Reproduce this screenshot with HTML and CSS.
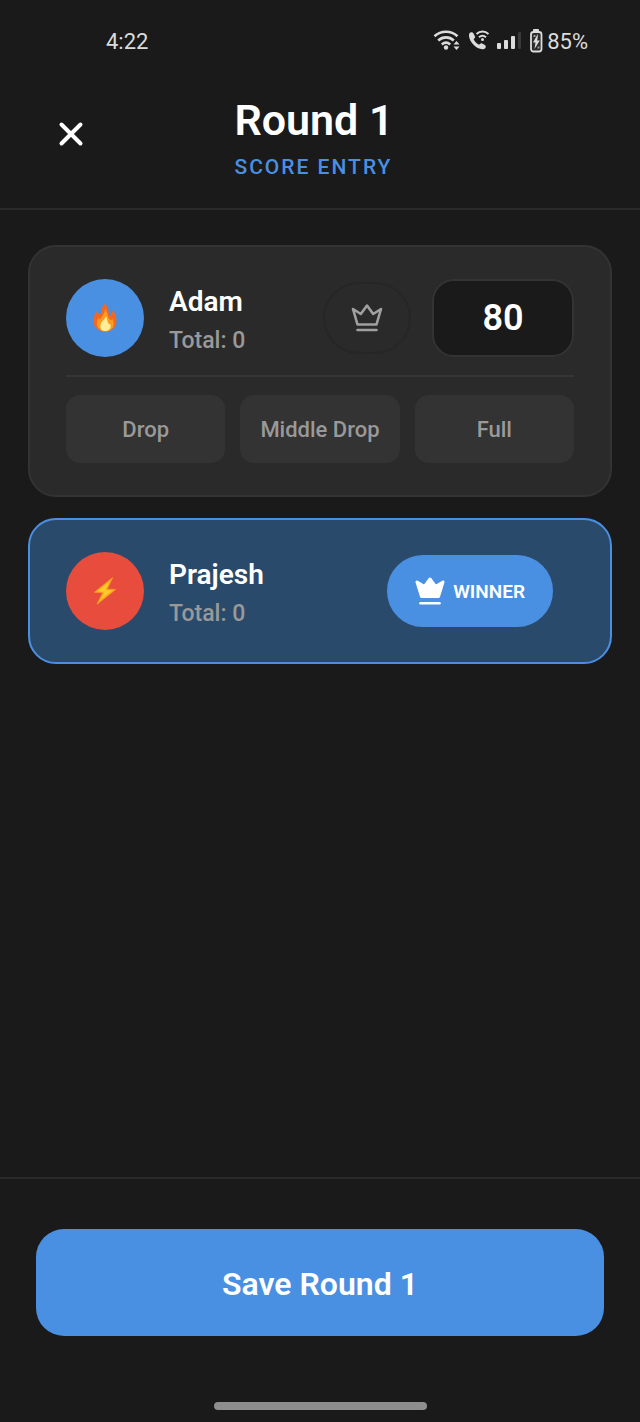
FILE: index.html
```html
<!DOCTYPE html>
<html lang="en">
<head>
<meta charset="utf-8">
<meta name="viewport" content="width=device-width, initial-scale=1">
<title>Round 1 – Score Entry</title>
<link rel="stylesheet" href="styles.css">
</head>
<body>
<div class="app">
  <div class="status">
    <span>4:22</span>
    <div class="status-icons">
      <svg width="28" height="24" viewBox="0 0 28 24" aria-hidden="true">
        <g fill="none" stroke="#dcdcdc" stroke-width="2.6">
          <path d="M1.5 7.300C8 1.300 18 1.300 24.500 7.300"/>
          <path d="M5.200 11.500C9.800 7.300 16.200 7.300 20.800 11.500"/>
          <path d="M8.800 15.500C11.500 13.200 14.500 13.200 17.200 15.500"/>
        </g>
        <circle cx="13" cy="18.500" r="2.200" fill="#dcdcdc"/>
        <path d="M20.500 15.500l3-3.500 3 3.500zM20.500 17.500l3 3.500 3-3.500z" fill="#dcdcdc"/>
      </svg>
      <svg width="22" height="24" viewBox="0 0 22 24" aria-hidden="true">
        <path d="M1.600 4C2.600 2.800 4.600 2.800 5.400 4.300L7 7.400C7.500 8.600 6.200 9.500 5.600 10.300C6.800 12.600 8.700 14.600 11.100 15.800C12 15 12.900 13.900 14.100 14.500L16.900 16.100C18.400 17.200 17.800 19 16.400 19.700C13.500 21.300 8.700 19 5.300 15.500C2.200 12.200-0.200 7.200 1.600 4Z" fill="#dcdcdc"/>
        <g fill="none" stroke="#dcdcdc" stroke-width="2">
          <path d="M8.500 5C12 1.800 17 1.800 20.500 5"/>
          <path d="M11 8.200C13 6.500 16 6.500 18 8.200"/>
        </g>
        <circle cx="14.500" cy="10.500" r="1.500" fill="#dcdcdc"/>
      </svg>
      <svg width="26" height="24" viewBox="0 0 26 24" aria-hidden="true">
        <g fill="#dcdcdc">
          <rect x="0" y="14" width="4" height="6" rx="1"/>
          <rect x="7" y="11" width="4" height="9" rx="1"/>
          <rect x="14" y="7" width="4" height="13" rx="1"/>
        </g>
        <rect x="21" y="3" width="3" height="17" rx="1" fill="#3a3a3a"/>
      </svg>
      <svg class="battery" width="14" height="24" viewBox="0 0 14 24" aria-hidden="true">
        <rect x="3" y="0" width="6" height="3" rx="1" fill="#dcdcdc"/>
        <rect x="1" y="3" width="10.500" height="19.500" rx="2.500" fill="#2c2c2c" stroke="#dcdcdc" stroke-width="1.800"/>
        <path d="M7.500 5.500L3 13.500h2.500L4.500 20 9.800 11.500H7.200L8 5.500z" fill="#dcdcdc"/>
        <path d="M3.500 7h2M7.500 18.500h2" stroke="#999" stroke-width="2"/>
      </svg>
      <span>85%</span>
    </div>
  </div>

  <header class="header">
    <button class="close" type="button" aria-label="Close">
      <svg width="26" height="26" viewBox="0 0 26 26" fill="none" stroke="#fff" stroke-width="4" stroke-linecap="round" aria-hidden="true"><path d="M3.500 3.500L22.500 22.500M22.500 3.500L3.500 22.500"/></svg>
    </button>
    <div>
      <h1 class="title">Round 1</h1>
      <p class="subtitle">SCORE ENTRY</p>
    </div>
  </header>

  <main class="players">
    <section class="card">
      <div class="row">
        <div class="avatar avatar-blue">
          <svg width="24" height="28" viewBox="0 0 24 28" aria-hidden="true">
            <path d="M11.600 0C8.500 2.500 9 6 8.200 8.600C7.600 10.200 6.200 11 5.200 9.600C4.700 8.800 4.700 7.600 4.800 6.600C1.500 9.300 0.300 13.500 0.500 17.500C0.800 23.800 5.800 27.500 12 27.500C18.500 27.500 23.200 23.800 23.500 17.500C23.700 12.500 21.500 9 20.300 6.300C18.500 7.500 18.600 9.800 17.900 11.200C17.200 12.100 16.200 11.700 16 10.500C15.500 6.500 15.800 2.500 11.600 0Z" fill="#f4671f"/>
            <path d="M11.800 5C12.500 9 9 11.500 8 14.300C7.400 15.500 6.200 15.400 5.300 14C3.500 17 3.200 20.500 5 23.500C6.800 26.500 9.500 27.500 12 27.500C15.500 27.500 19 26 20.300 22.500C21.200 20 20.700 17.300 19.600 15C18.900 16.300 17.500 16.500 16.600 15.300C14.500 12.500 14.800 8 11.800 5Z" fill="#fb9b20"/>
            <path d="M12.500 12C12.800 15 9.300 16.500 8.200 19C6.500 22.500 7.200 27 12 27C16.500 27 18.300 24 17.500 20.800C17.100 20 16.500 20.500 15.600 19.600C13.800 17.700 15 14.500 12.500 12Z" fill="#ffed97"/>
          </svg>
        </div>
        <div class="info">
          <h2 class="name">Adam</h2>
          <p class="total">Total: 0</p>
        </div>
        <button class="crown" type="button" aria-label="Mark Adam as winner">
          <svg width="32" height="30" viewBox="0 0 32 30" fill="none" stroke="#a0a0a0" stroke-width="2.600" stroke-linejoin="round" stroke-linecap="round" aria-hidden="true"><path d="M2 6L6.500 21.500H25.500L30 6L22.200 11L16 2.500L9.800 11ZM6.500 27H25.500"/></svg>
        </button>
        <input class="score" type="text" inputmode="numeric" value="80" aria-label="Score for Adam">
      </div>
      <div class="presets">
        <button class="preset" type="button">Drop</button>
        <button class="preset" type="button">Middle Drop</button>
        <button class="preset" type="button">Full</button>
      </div>
    </section>

    <section class="card card-winner">
      <div class="row">
        <div class="avatar avatar-red">
          <svg width="24" height="28" viewBox="0 0 24 28" aria-hidden="true">
            <path d="M19.500 0.800L1.500 15.200L10 15.500L4 27.200L22.500 12.500L14 12.200Z" fill="#fdb71c" stroke="#f59a22" stroke-width="1" stroke-linejoin="round"/>
            <path d="M16.500 5L5 14.300L12 14.500L8 22L18.500 13.500L12 13Z" fill="#fecb2f"/>
          </svg>
        </div>
        <div class="info">
          <h2 class="name">Prajesh</h2>
          <p class="total">Total: 0</p>
        </div>
        <button class="crown crown-on" type="button">
          <svg width="30" height="29" viewBox="0 0 30 29" fill="#fff" stroke="#fff" stroke-linejoin="round" stroke-linecap="round" aria-hidden="true"><path stroke-width="3" d="M2 5L6.500 19.500H23.500L28 5L20.500 9.500L15 2L9.500 9.500Z"/><path stroke-width="2.600" d="M5.500 26.200H24.500"/></svg>
          WINNER
        </button>
      </div>
    </section>
  </main>

  <footer class="footer">
    <button class="save" type="button">Save Round 1</button>
    <div class="home-bar"></div>
  </footer>
</div>
</body>
</html>
```
FILE: styles.css
```css
* {
  box-sizing: border-box;
}

body {
  margin: 0;
  background: #1a1a1a;
  color: #fff;
  font-family: Roboto, "Liberation Sans", sans-serif;
}

h1, h2, p {
  margin: 0;
}

button, input {
  font: inherit;
  color: inherit;
  margin: 0;
  padding: 0;
  border: 0;
  background: none;
}

svg {
  display: block;
  flex: none;
}

.app {
  display: flex;
  flex-direction: column;
  min-height: 100vh;
}

.status {
  display: flex;
  justify-content: space-between;
  align-items: center;
  height: 82px;
  padding: 0 52px 0 106px;
  font-size: 22px;
  color: #dcdcdc;
}

.status-icons {
  display: flex;
  align-items: center;
  gap: 7px;
}

.battery + span {
  margin-left: -4px;
}

.header {
  display: grid;
  grid-template-columns: 70px auto 82px;
  justify-content: space-between;
  align-items: start;
  padding: 13px 36px 23px;
  border-bottom: 2px solid #2a2a2a;
}

.close {
  display: flex;
  align-items: center;
  justify-content: center;
  height: 78px;
}

.title {
  font-size: 43px;
  line-height: 50px;
  font-weight: 600;
}

.subtitle {
  margin-top: 4px;
  font-size: 21px;
  line-height: 36px;
  font-weight: 500;
  letter-spacing: 2px;
  color: #4a90e2;
}

.players {
  flex: 1;
  display: flex;
  flex-direction: column;
  gap: 21px;
  padding: 35px 28px;
}

.card {
  padding: 32px 36px;
  border: 2px solid #333;
  border-radius: 28px;
  background: #2a2a2a;
}

.card-winner {
  border-color: #4a90e2;
  background: #2a4a6b;
}

.row {
  display: flex;
  align-items: center;
}

.avatar {
  display: flex;
  align-items: center;
  justify-content: center;
  flex: none;
  width: 78px;
  height: 78px;
  border-radius: 50%;
}

.avatar-blue {
  background: #4a90e2;
}

.avatar-red {
  background: #e74c3c;
}

.info {
  flex: 1;
  margin-left: 25px;
  padding-top: 5px;
}

.name {
  font-size: 28px;
  line-height: 36px;
  font-weight: 600;
}

.total {
  margin-top: 5px;
  font-size: 23px;
  line-height: 32px;
  font-weight: 500;
  color: #999;
}

.crown {
  display: flex;
  align-items: center;
  justify-content: center;
  gap: 8px;
  height: 72px;
  margin-right: 21px;
  padding: 0 26px;
  border: 2px solid #262626;
  border-radius: 36px;
  font-size: 19px;
  font-weight: 600;
}

.crown-on {
  border-color: #4a90e2;
  background: #4a90e2;
}

.score {
  width: 142px;
  height: 78px;
  border: 2px solid #333;
  border-radius: 22px;
  background: #1a1a1a;
  text-align: center;
  font-size: 36px;
  font-weight: 600;
}

.presets {
  display: grid;
  grid-template-columns: repeat(3, 1fr);
  gap: 15px;
  margin-top: 18px;
  padding-top: 18px;
  border-top: 2px solid #353535;
}

.preset {
  height: 68px;
  border-radius: 14px;
  background: #333;
  color: #999;
  font-size: 22px;
  font-weight: 500;
}

.footer {
  display: flex;
  flex-direction: column;
  align-items: center;
  padding: 50px 36px 12px;
  border-top: 2px solid #2a2a2a;
}

.save {
  width: 100%;
  height: 107px;
  padding-top: 3px;
  border-radius: 28px;
  background: #4a90e2;
  font-size: 32px;
  font-weight: 600;
}

.home-bar {
  width: 37.5%;
  height: 8px;
  margin-top: 66px;
  border-radius: 4px;
  background: #8e8e8e;
}
```
